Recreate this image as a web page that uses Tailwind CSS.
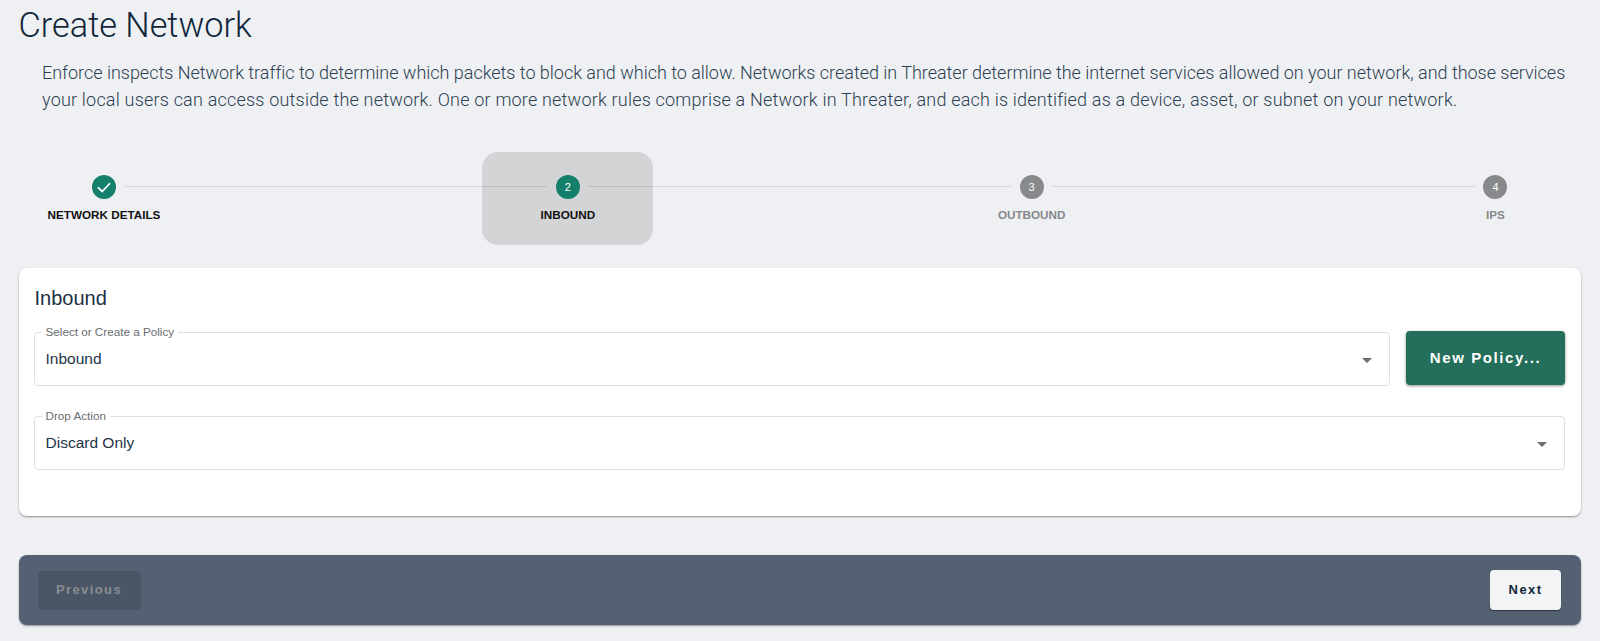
<!DOCTYPE html>
<html lang="en">
<head>
  <meta charset="UTF-8" />
  <title>Create Network</title>
  <script src="https://cdn.jsdelivr.net/npm/@tailwindcss/browser@4"></script>
</head>
<body class="bg-[#eff0f4] h-screen overflow-hidden font-['Liberation_Sans',sans-serif] text-[#10263a]">
  <div class="pl-[18.5px] pr-[19px]">

    <h1 class="pt-[5px] h-[53px] text-[34.3px] leading-[40px] font-light font-['Roboto',sans-serif]">Create Network</h1>

    <p class="ml-[23.5px] mt-[6px] text-[18px] leading-[27px] font-light font-['Roboto',sans-serif] text-[#2c3f50] whitespace-nowrap">
      <span class="tracking-[-0.02px]">Enforce inspects Network traffic to determine which packets to block and which to allow. Networks created in Threater determine the internet services allowed on your network, and those services</span><br />
      <span class="tracking-[0.2px]">your local users can access outside the network. One or more network rules comprise a Network in Threater, and each is identified as a device, asset, or subnet on your network.</span>
    </p>

    <!-- Stepper -->
    <div class="flex mt-[39px] h-[93px] text-[11.7px] font-bold">
      <div class="w-[171px] shrink-0 flex flex-col items-center pt-[23px] rounded-[16px]">
        <span class="w-6 h-6 rounded-full bg-[#14806c] flex items-center justify-center">
          <svg class="w-[18px] h-[18px]" viewBox="0 0 24 24" fill="none" stroke="white" stroke-width="2.4"><path d="M4 12.5l5.5 5.5L20 7" /></svg>
        </span>
        <span class="mt-[9px] leading-[13px] text-[#111]">NETWORK DETAILS</span>
      </div>
      <div class="relative flex-1 h-px mt-[34px] mx-[-65px] bg-black/10"></div>
      <div class="w-[171px] shrink-0 flex flex-col items-center pt-[23px] rounded-[16px] bg-[#d3d4d6]">
        <span class="w-6 h-6 rounded-full bg-[#14806c] text-white text-[11px] font-normal flex items-center justify-center">2</span>
        <span class="mt-[9px] leading-[13px] text-[#111]">INBOUND</span>
      </div>
      <div class="relative flex-1 h-px mt-[34px] mx-[-65px] bg-black/10"></div>
      <div class="w-[171px] shrink-0 flex flex-col items-center pt-[23px] rounded-[16px]">
        <span class="w-6 h-6 rounded-full bg-[#87898b] text-white text-[11px] font-normal flex items-center justify-center">3</span>
        <span class="mt-[9px] leading-[13px] text-[#85878a]">OUTBOUND</span>
      </div>
      <div class="relative flex-1 h-px mt-[34px] mx-[-65px] bg-black/10"></div>
      <div class="w-[171px] shrink-0 flex flex-col items-center pt-[23px] rounded-[16px]">
        <span class="w-6 h-6 rounded-full bg-[#87898b] text-white text-[11px] font-normal flex items-center justify-center">4</span>
        <span class="mt-[9px] leading-[13px] text-[#85878a]">IPS</span>
      </div>
    </div>

    <!-- Card -->
    <section class="mt-[23px] h-[248px] bg-white rounded-lg shadow-[0_1px_2px_rgba(0,0,0,0.4)] pl-[15px] pr-[16px] pt-[20px]">
      <h2 class="pl-px text-[20px] leading-[21px] text-[#1b3044]">Inbound</h2>
      <div class="flex gap-4 mt-[17px]">
        <fieldset class="flex-1 h-[60px] border border-[#dedfe1] rounded px-[7px]">
          <legend class="px-[4px] text-[11.7px] leading-[12px] text-[#6a6d70]">Select or Create a Policy</legend>
          <div class="flex items-center justify-between pl-[4px] pr-[10px] pt-[12px] text-[15.5px] leading-[18px] text-[#1f3447]">
            <span>Inbound</span>
            <span class="w-0 h-0 mt-[2px] border-x-[5px] border-x-transparent border-t-[5px] border-t-[#6b6d70]"></span>
          </div>
        </fieldset>
        <button class="w-[159px] h-[54px] mt-[5px] rounded bg-[#236f5b] text-white text-[15px] font-bold tracking-[1.6px] shadow-[0_1px_3px_rgba(0,0,0,0.45)]">New Policy...</button>
      </div>
      <fieldset class="mt-[24px] h-[60px] border border-[#dedfe1] rounded px-[7px]">
        <legend class="px-[4px] text-[11.7px] leading-[12px] text-[#6a6d70]">Drop Action</legend>
        <div class="flex items-center justify-between pl-[4px] pr-[10px] pt-[12px] text-[15.5px] leading-[18px] text-[#1f3447]">
          <span>Discard Only</span>
          <span class="w-0 h-0 mt-[2px] border-x-[5px] border-x-transparent border-t-[5px] border-t-[#6b6d70]"></span>
        </div>
      </fieldset>
    </section>

    <!-- Footer bar -->
    <div class="mt-[39px] h-[70px] bg-[#536173] rounded-lg shadow-[0_1px_2px_rgba(0,0,0,0.4)] pl-[19px] pr-[20px] flex items-center justify-between">
      <button class="w-[103px] h-[39px] rounded bg-[#4a5666] text-[#888c92] text-[13px] font-bold tracking-[1.4px]">Previous</button>
      <button class="w-[71px] h-[40px] rounded bg-[#f3f4f6] text-[#10263a] text-[13px] font-bold tracking-[1.4px] shadow-[0_1px_1px_rgba(0,0,0,0.5)]">Next</button>
    </div>

  </div>
</body>
</html>
